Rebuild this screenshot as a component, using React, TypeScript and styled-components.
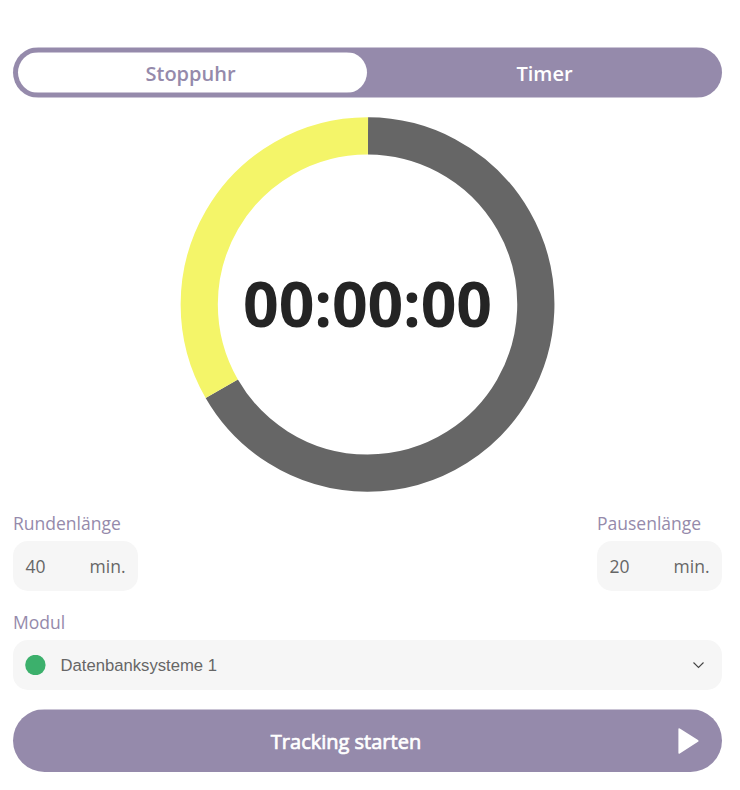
import React from "react";
import styled, { createGlobalStyle } from "styled-components";

const purple = "#958aab";
const purpleEdge = "#cac4d5";

const GlobalStyle = createGlobalStyle`
  * { box-sizing: border-box; }
  body { margin: 0; background: #fff; font-family: "Open Sans", sans-serif; }
`;

const Page = styled.main`
  width: 740px;
  height: 790px;
  padding: 47px 18px 0 13px;
  display: flex;
  flex-direction: column;
`;

const Tabs = styled.div`
  display: flex;
  height: 51px;
  padding: 5px;
  border-radius: 25.5px;
  background: linear-gradient(${purpleEdge} 1px, ${purple} 1px, ${purple} 50px, ${purpleEdge} 50px);
`;

const Tab = styled.button<{ $active?: boolean }>`
  flex: ${(p) => (p.$active ? "0 0 349px" : "1")};
  border: 0;
  padding: ${(p) => (p.$active ? "1px 4px 0 0" : "1px 0 0 5px")};
  border-radius: 20.5px;
  font: 600 20px "Open Sans", sans-serif;
  color: ${(p) => (p.$active ? purple : "#fff")};
  background: ${(p) =>
    p.$active ? `linear-gradient(${purpleEdge} 1px, #fff 1px, #fff 40px, ${purpleEdge} 40px)` : "transparent"};
`;

const Dial = styled.div`
  display: grid;
  width: 375px;
  height: 375px;
  margin: 19px 0 0 167px;
  place-items: center;
  > * { grid-area: 1 / 1; }
`;

const Time = styled.time`
  margin-bottom: 4px;
  font-size: 62.5px;
  font-weight: 700;
  line-height: 80px;
  letter-spacing: -0.15px;
  color: #242424;
`;

const Lengths = styled.div`
  display: flex;
  justify-content: space-between;
  margin-top: 18px;
`;

const Field = styled.div`
  width: 125px;
`;

const Label = styled.div`
  height: 31px;
  line-height: 27px;
  font-size: 17.5px;
  color: ${purple};
`;

const Box = styled.div`
  display: flex;
  align-items: center;
  justify-content: space-between;
  height: 50px;
  padding: 0 12.5px;
  border-radius: 15px;
  background: #f6f6f6;
  color: #666;
  font-size: 17.5px;
`;

const Module = styled.section`
  margin-top: 18px;
`;

const Select = styled(Box)`
  justify-content: flex-start;
  padding-right: 17px;
  padding-left: 12px;
  font: 16.67px "Liberation Sans", sans-serif;
  svg { margin-left: auto; }
`;

const ModuleName = styled.span`
  padding-top: 2px;
`;

const Dot = styled.svg.attrs({ width: 21, height: 20, viewBox: "0 0 21 20" })`
  && { margin: 0 14.5px 0 0; }
`;

const Start = styled.button`
  display: flex;
  align-items: center;
  height: 63px;
  margin-top: 19px;
  padding: 0 22px 0 0;
  border: 0;
  border-radius: 31.5px;
  background: linear-gradient(${purpleEdge} 1px, ${purple} 1px);
  color: #fff;
  font: 400 20px "Open Sans", sans-serif;
`;

const StartText = styled.span`
  flex: 1;
  padding: 2px 0 0 1px;
  -webkit-text-stroke: 0.7px #fff;
`;

export default function App() {
  return (
    <>
      <GlobalStyle />
      <Page>
        <Tabs>
          <Tab $active>Stoppuhr</Tab>
          <Tab>Timer</Tab>
        </Tabs>
        <Dial>
          <svg width="375" height="375" viewBox="0 0 375 375" fill="none" strokeWidth="37.2">
            <path d="M188 18.9A168.3 168.6 0 1 1 41.75 271.75" stroke="#666" />
            <path d="M41.75 271.75A168.3 168.6 0 0 1 188 18.9" stroke="#f4f569" />
          </svg>
          <Time>00:00:00</Time>
        </Dial>
        <Lengths>
          <Field>
            <Label>Rundenlänge</Label>
            <Box><span>40</span><span>min.</span></Box>
          </Field>
          <Field>
            <Label>Pausenlänge</Label>
            <Box><span>20</span><span>min.</span></Box>
          </Field>
        </Lengths>
        <Module>
          <Label>Modul</Label>
          <Select>
            <Dot><circle cx="10.4" cy="10" r="10.2" fill="#3cb06c" /></Dot>
            <ModuleName>Datenbanksysteme 1</ModuleName>
            <svg width="13" height="8" viewBox="0 0 13 8" fill="none" stroke="#444" strokeWidth="1.1">
              <path d="M1.5 1.5L6.5 6.5L11.5 1.5" />
            </svg>
          </Select>
        </Module>
        <Start>
          <StartText>Tracking starten</StartText>
          <svg width="22" height="26" viewBox="0 0 22 26" fill="#fff">
            <path d="M.4 1.3Q.4-.3 1.8.6L20 12.1Q21.1 12.9 20 13.7L1.8 25.4Q.4 26.3.4 24.7Z" />
          </svg>
        </Start>
      </Page>
    </>
  );
}
